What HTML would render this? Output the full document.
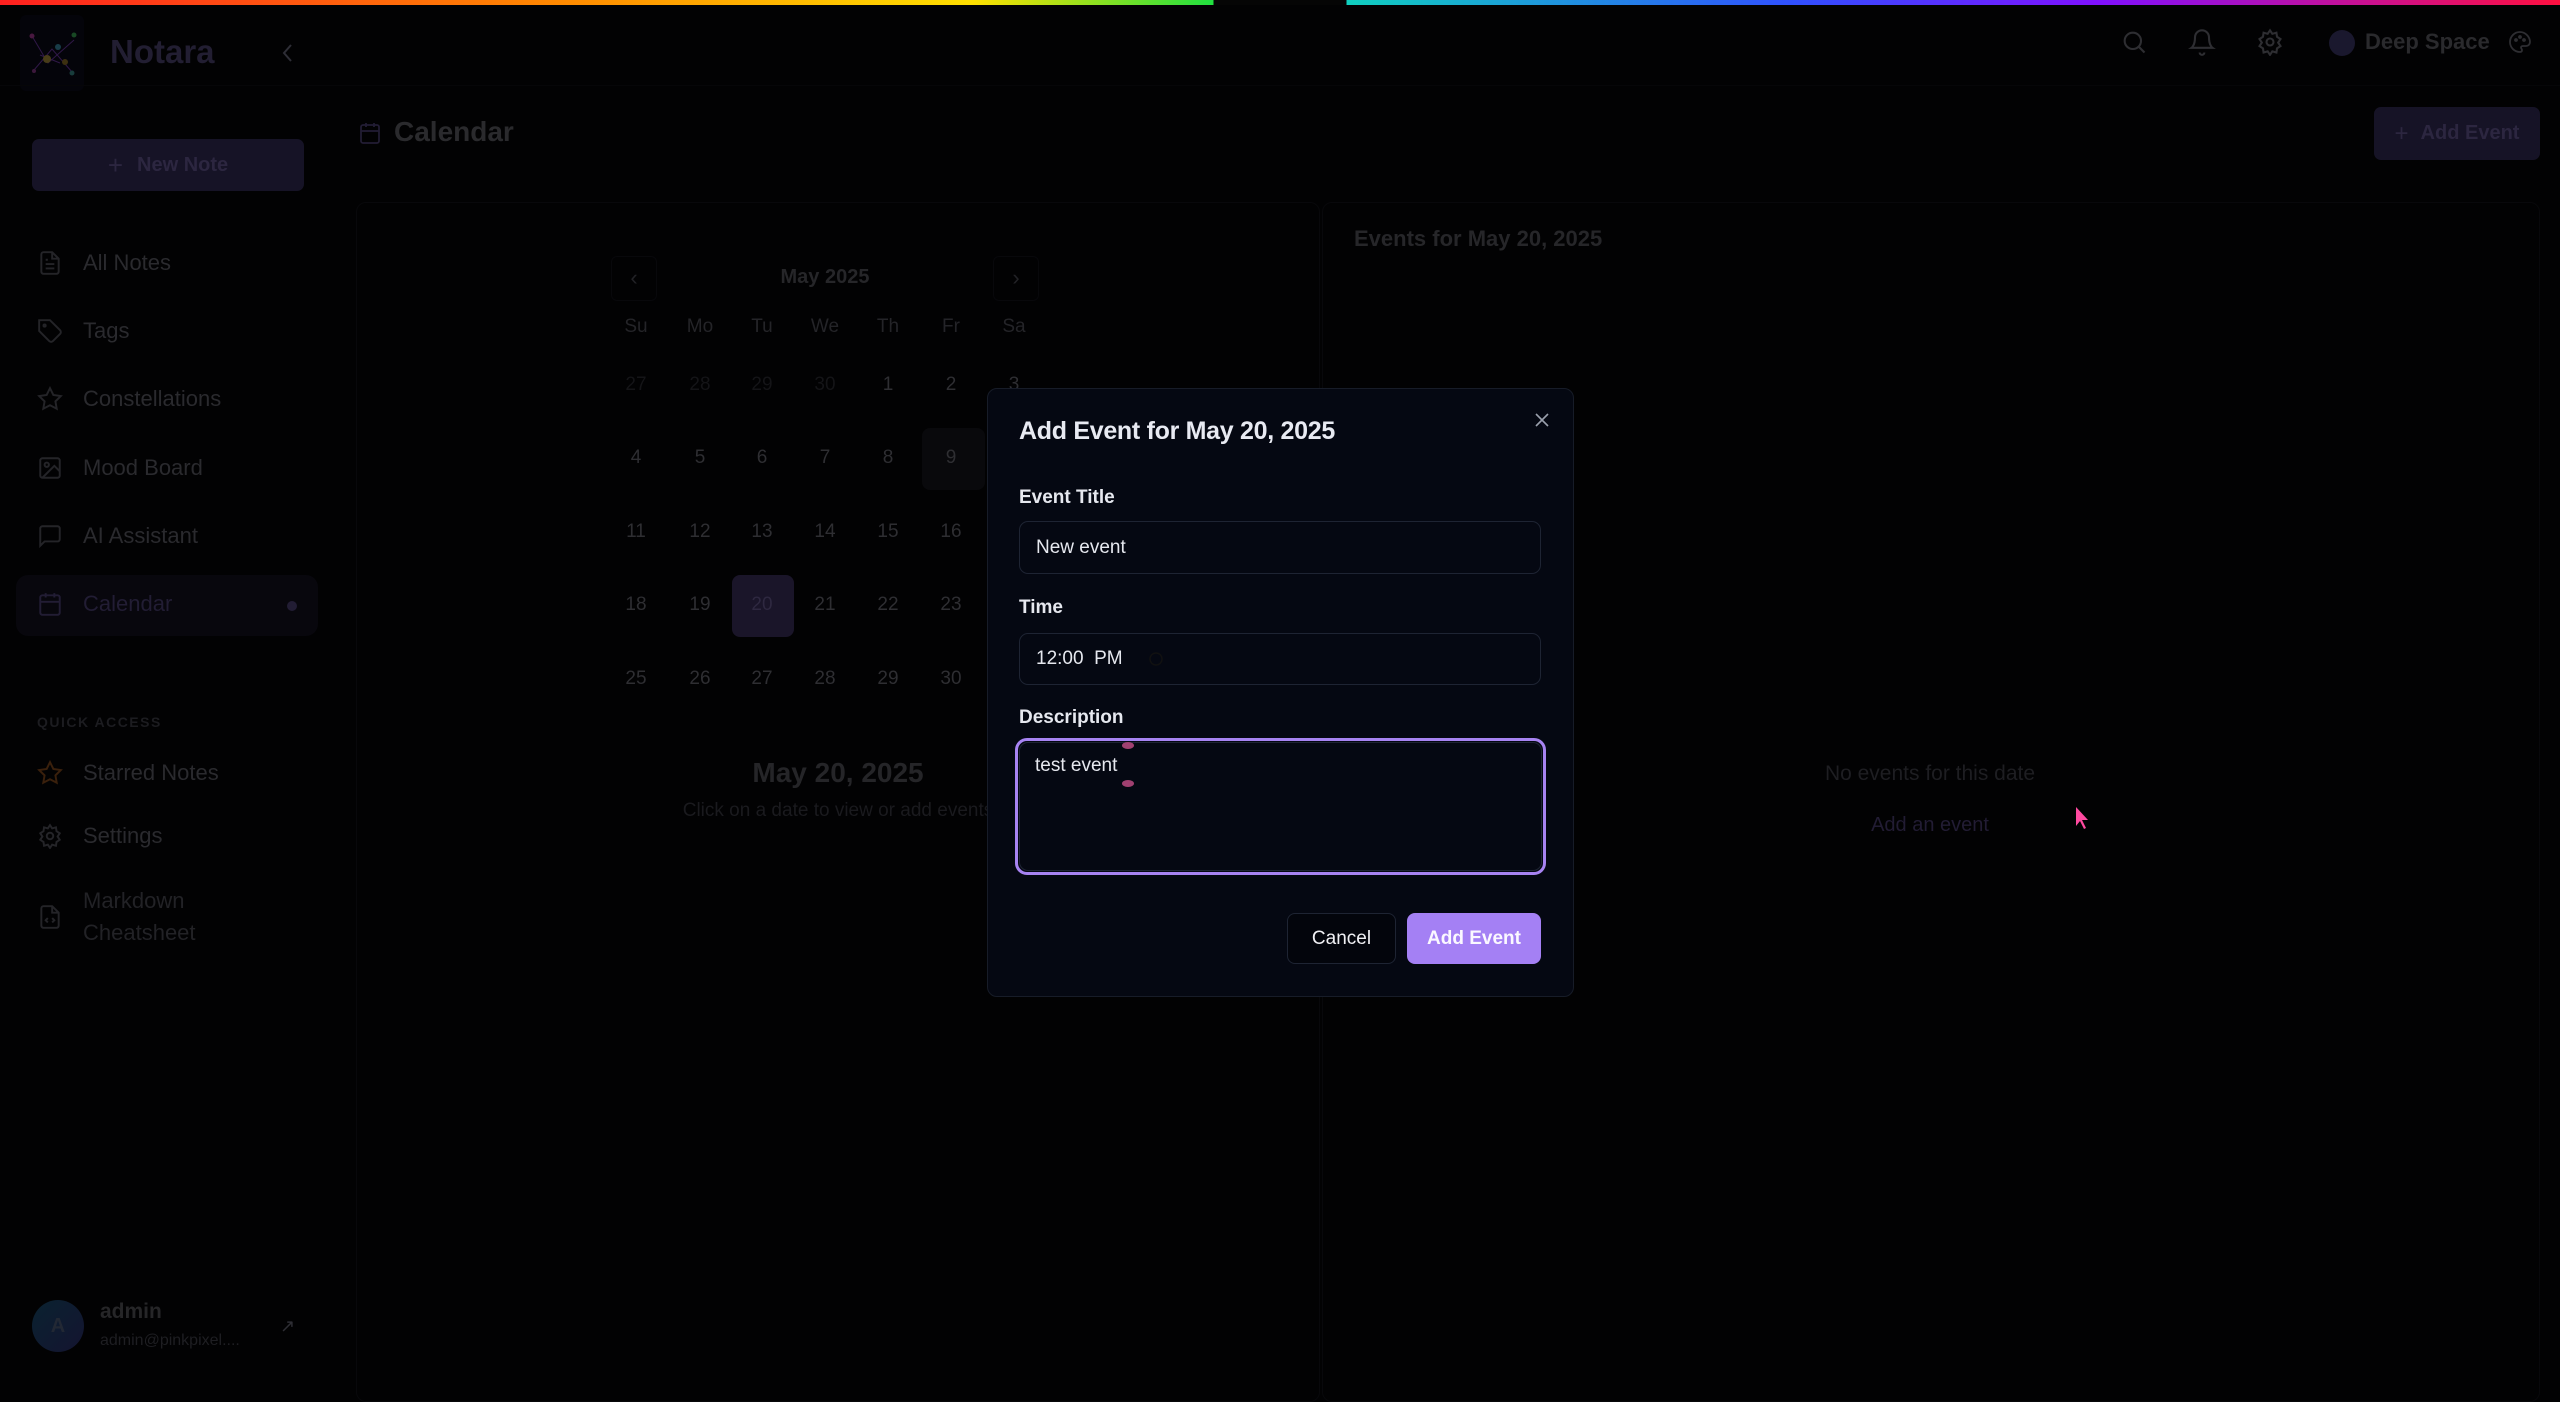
<!DOCTYPE html>
<html><head><meta charset="utf-8"><style>
*{box-sizing:border-box;margin:0;padding:0}
body{width:2560px;height:1383px;background:#020203;font-family:"Liberation Sans",sans-serif;position:relative;overflow:hidden;color:#2c2c30}
.abs{position:absolute}
.bar{left:0;top:0;height:5px;width:2560px;background:linear-gradient(90deg,#ff2020 0%,#ff8a00 22%,#ffe000 38%,#20e040 47.4%,#050505 47.4%,#050505 52.6%,#10d0c0 52.6%,#3050ff 70%,#8010ff 82%,#ff1040 100%)}
.nav{left:37px;font-size:22px;color:#2a2a2e;display:flex;align-items:center;gap:20px}
.nav svg{width:26px;height:26px;stroke:#242428;fill:none;stroke-width:1.8}
.card{border:1px solid #08080b;border-radius:10px}
.dh,.dn{position:absolute;width:60px;text-align:center;font-size:19px}
.dh{color:#242428;top:316px}
.dn{color:#2e2e32}
.lbl{left:1019px;font-size:19px;font-weight:bold;color:#e6e8ef}
.inp{left:1019px;width:522px;border:1px solid #1e2433;border-radius:9px;background:#050812;color:#e6e8ef;font-size:19px;padding-left:16px}
</style></head><body>
<div class="abs bar"></div>
<div class="abs" style="left:20px;top:15px;width:64px;height:76px;background:#04040a;border-radius:6px">
<svg width="64" height="76" viewBox="0 0 64 76"><g stroke-width="1" fill="none"><path d="M12 21 L28 48 L54 25 M14 55 L32 34 L52 57 M20 40 L40 48" stroke="#301848"/></g>
<circle cx="12" cy="21" r="2.5" fill="#481840"/><circle cx="54" cy="20" r="2.5" fill="#184824"/><circle cx="38" cy="32" r="3" fill="#183c48"/><circle cx="27" cy="44" r="4" fill="#483c18"/><circle cx="45" cy="47" r="3" fill="#3c3010"/><circle cx="52" cy="58" r="2.5" fill="#183c3c"/><circle cx="14" cy="56" r="2" fill="#3c183c"/></svg></div>
<div class="abs" style="left:110px;top:33px;font-size:33px;font-weight:bold;color:#221e32">Notara</div>
<svg class="abs" style="left:280px;top:42px" width="16" height="22" viewBox="0 0 16 22"><path d="M11 3 L4 11 L11 19" stroke="#2e2e36" stroke-width="2" fill="none"/></svg>
<div class="abs" style="left:0;top:85px;width:2560px;height:1px;background:#060608"></div>
<div class="abs" style="left:32px;top:139px;width:272px;height:52px;background:#161326;border-radius:7px;color:#2c2640;font-size:20px;font-weight:bold;display:flex;align-items:center;justify-content:center;gap:14px"><span style="font-weight:normal;font-size:26px">+</span>New Note</div>
<div class="abs nav" style="top:250px"><svg viewBox="0 0 24 24"><path d="M14 2H6a2 2 0 0 0-2 2v16a2 2 0 0 0 2 2h12a2 2 0 0 0 2-2V8z M14 2v6h6 M8 13h8 M8 17h8 M8 9h2"/></svg>All Notes</div>
<div class="abs nav" style="top:318px"><svg viewBox="0 0 24 24"><path d="M12 2H2v10l9.3 9.3a2.4 2.4 0 0 0 3.4 0l6.6-6.6a2.4 2.4 0 0 0 0-3.4z"/><circle cx="7" cy="7" r="1"/></svg>Tags</div>
<div class="abs nav" style="top:386px"><svg viewBox="0 0 24 24"><path d="M12 2l3.1 6.3 6.9 1-5 4.9 1.2 6.8L12 17.8 5.8 21l1.2-6.8-5-4.9 6.9-1z"/></svg>Constellations</div>
<div class="abs nav" style="top:455px"><svg viewBox="0 0 24 24"><rect x="3" y="3" width="18" height="18" rx="2"/><circle cx="9" cy="9" r="2"/><path d="M21 15l-5-5L5 21"/></svg>Mood Board</div>
<div class="abs nav" style="top:523px"><svg viewBox="0 0 24 24"><path d="M21 15a2 2 0 0 1-2 2H7l-4 4V5a2 2 0 0 1 2-2h14a2 2 0 0 1 2 2z"/></svg>AI Assistant</div>
<div class="abs" style="left:16px;top:575px;width:302px;height:61px;background:#08070d;border-radius:12px"></div>
<div class="abs nav" style="top:591px;color:#221d34"><svg viewBox="0 0 24 24" style="stroke:#221d34"><rect x="3" y="4" width="18" height="18" rx="2"/><path d="M16 2v4M8 2v4M3 10h18"/></svg>Calendar</div>
<div class="abs" style="left:287px;top:601px;width:10px;height:10px;border-radius:50%;background:#221d34"></div>
<div class="abs" style="left:37px;top:714px;font-size:14px;font-weight:bold;letter-spacing:1.5px;color:#1c1c20">QUICK ACCESS</div>
<div class="abs nav" style="top:760px"><svg viewBox="0 0 24 24" style="stroke:#3a200c"><path d="M12 2l3.1 6.3 6.9 1-5 4.9 1.2 6.8L12 17.8 5.8 21l1.2-6.8-5-4.9 6.9-1z"/></svg>Starred Notes</div>
<div class="abs nav" style="top:823px"><svg viewBox="0 0 24 24"><circle cx="12" cy="12" r="3"/><path d="M12 2l2 3 3.5-1 .5 3.5 3 2-2 3 2 3-3 2-.5 3.5-3.5-1-2 3-2-3-3.5 1-.5-3.5-3-2 2-3-2-3 3-2 .5-3.5 3.5 1z"/></svg>Settings</div>
<div class="abs nav" style="top:885px;line-height:32px;color:#222226"><svg viewBox="0 0 24 24"><path d="M14 2H6a2 2 0 0 0-2 2v16a2 2 0 0 0 2 2h12a2 2 0 0 0 2-2V8z M14 2v6h6 M10 13l-2 2 2 2 M14 13l2 2-2 2"/></svg><span>Markdown<br>Cheatsheet</span></div>
<div class="abs" style="left:32px;top:1300px;width:52px;height:52px;border-radius:50%;background:linear-gradient(135deg,#0a2230,#141430);color:#222834;font-size:20px;font-weight:bold;text-align:center;line-height:52px">A</div>
<div class="abs" style="left:100px;top:1300px;font-size:21px;font-weight:bold;color:#262628">admin</div>
<div class="abs" style="left:100px;top:1332px;font-size:16px;color:#1e1e22">admin@pinkpixel....</div>
<div class="abs" style="left:280px;top:1316px;color:#2e2e34;font-size:18px">↗</div>
<svg class="abs" style="left:358px;top:120px" width="24" height="26" viewBox="0 0 24 24"><rect x="3" y="4" width="18" height="18" rx="2" stroke="#221d34" stroke-width="1.8" fill="none"/><path d="M16 2v4M8 2v4M3 10h18" stroke="#221d34" stroke-width="1.8"/></svg>
<div class="abs" style="left:394px;top:116px;font-size:28px;font-weight:bold;color:#2a2a2d">Calendar</div>
<svg class="abs" style="left:2120px;top:28px" width="28" height="28" viewBox="0 0 24 24" fill="none" stroke="#2e2e32" stroke-width="1.8"><circle cx="11" cy="11" r="7"/><path d="M21 21l-5-5"/></svg>
<svg class="abs" style="left:2188px;top:28px" width="28" height="28" viewBox="0 0 24 24" fill="none" stroke="#2e2e32" stroke-width="1.8"><path d="M6 8a6 6 0 0 1 12 0c0 7 3 9 3 9H3s3-2 3-9M10 21a2 2 0 0 0 4 0"/></svg>
<svg class="abs" style="left:2256px;top:28px" width="28" height="28" viewBox="0 0 24 24" fill="none" stroke="#2e2e32" stroke-width="1.8"><circle cx="12" cy="12" r="3"/><path d="M12 2l2 3 3.5-1 .5 3.5 3 2-2 3 2 3-3 2-.5 3.5-3.5-1-2 3-2-3-3.5 1-.5-3.5-3-2 2-3-2-3 3-2 .5-3.5 3.5 1z"/></svg>
<div class="abs" style="left:2329px;top:30px;width:26px;height:26px;border-radius:50%;background:#1a182e"></div>
<div class="abs" style="left:2365px;top:29px;font-size:22px;font-weight:bold;color:#2a2a2d">Deep Space</div>
<svg class="abs" style="left:2508px;top:30px" width="24" height="24" viewBox="0 0 24 24" fill="none" stroke="#2e2e32" stroke-width="1.8"><path d="M12 2a10 10 0 0 0 0 20c1.5 0 2-1 2-2s-1-1.5-1-2.5 1-1.5 2-1.5h3a4 4 0 0 0 4-4c0-5-4.5-10-10-10z"/><circle cx="8" cy="10" r="1"/><circle cx="12" cy="7" r="1"/><circle cx="16" cy="10" r="1"/></svg>
<div class="abs" style="left:2374px;top:107px;width:166px;height:53px;background:#161326;border-radius:7px;color:#2c2640;font-size:20px;font-weight:bold;display:flex;align-items:center;justify-content:center;gap:12px"><span style="font-weight:normal;font-size:24px">+</span>Add Event</div>
<div class="abs card" style="left:356px;top:202px;width:964px;height:1200px"></div>
<div class="abs card" style="left:1322px;top:202px;width:1218px;height:1200px"></div>
<div class="abs" style="left:611px;top:256px;width:46px;height:45px;border:1px solid #08080b;border-radius:6px;color:#222226;text-align:center;line-height:42px;font-size:22px">‹</div>
<div class="abs" style="left:993px;top:256px;width:46px;height:45px;border:1px solid #08080b;border-radius:6px;color:#222226;text-align:center;line-height:42px;font-size:22px">›</div>
<div class="abs" style="left:725px;top:266px;width:200px;text-align:center;font-size:20px;font-weight:bold;color:#262629">May 2025</div>
<div class="abs" style="left:922px;top:428px;width:63px;height:62px;background:#09090c;border-radius:8px"></div>
<div class="abs" style="left:732px;top:575px;width:62px;height:62px;background:#1a1529;border-radius:8px"></div>
<div class="dh" style="left:606px">Su</div><div class="dh" style="left:670px">Mo</div><div class="dh" style="left:732px">Tu</div><div class="dh" style="left:795px">We</div><div class="dh" style="left:858px">Th</div><div class="dh" style="left:921px">Fr</div><div class="dh" style="left:984px">Sa</div>
<div id="days"></div>
<div class="abs" style="left:600px;top:757px;width:476px;text-align:center;font-size:28px;font-weight:bold;color:#252528">May 20, 2025</div>
<div class="abs" style="left:600px;top:800px;width:476px;text-align:center;font-size:19px;color:#1a1a1e;white-space:nowrap">Click on a date to view or add events</div>
<div class="abs" style="left:1354px;top:226px;font-size:22px;font-weight:bold;color:#262629">Events for May 20, 2025</div>
<div class="abs" style="left:1730px;top:762px;width:400px;text-align:center;font-size:21px;color:#1e1e22">No events for this date</div>
<div class="abs" style="left:1730px;top:814px;width:400px;text-align:center;font-size:20px;color:#221c34">Add an event</div>
<svg class="abs" style="left:2075px;top:806px" width="16" height="26" viewBox="0 0 16 26"><path d="M1 1 L1 20 L5 15 L9 23 L11 22 L7 14 L13 14 Z" fill="#ff4aa0"/></svg>
<div class="abs" style="left:987px;top:388px;width:587px;height:609px;background:#050812;border:1px solid #171c28;border-radius:10px"></div>
<div class="abs" style="left:1019px;top:417px;font-size:25px;font-weight:bold;color:#e8eaf2;letter-spacing:-0.3px">Add Event for May 20, 2025</div>
<svg class="abs" style="left:1534px;top:412px" width="16" height="16" viewBox="0 0 16 16"><path d="M2 2L14 14M14 2L2 14" stroke="#9aa0ac" stroke-width="1.6"/></svg>
<div class="abs lbl" style="top:487px">Event Title</div>
<div class="abs inp" style="top:521px;height:53px;line-height:51px">New event</div>
<div class="abs lbl" style="top:597px">Time</div>
<div class="abs inp" style="top:633px;height:52px;line-height:50px">12:00&nbsp; PM <svg style="vertical-align:middle;margin-left:20px" width="16" height="16" viewBox="0 0 16 16"><circle cx="8" cy="8" r="6" stroke="#111" stroke-width="1.5" fill="none"/></svg></div>
<div class="abs lbl" style="top:707px">Description</div>
<div class="abs" style="left:1015px;top:738px;width:531px;height:137px;border:3px solid #a783f2;border-radius:12px;background:#050812"></div>
<div class="abs" style="left:1019px;top:742px;width:523px;height:129px;border:1px solid #1e2433;border-radius:9px"></div>
<div class="abs" style="left:1035px;top:755px;font-size:19px;color:#e6e8ef">test event</div>
<div class="abs" style="left:1122px;top:742px;width:12px;height:7px;border-radius:50%;background:#a04070"></div>
<div class="abs" style="left:1122px;top:780px;width:12px;height:7px;border-radius:50%;background:#a04070"></div>
<div class="abs" style="left:1287px;top:913px;width:109px;height:51px;border:1px solid #1e2433;border-radius:8px;background:#03050c;color:#f0f0f4;font-size:19px;text-align:center;line-height:49px">Cancel</div>
<div class="abs" style="left:1407px;top:913px;width:134px;height:51px;border-radius:8px;background:#a480f4;color:#fbf8ff;font-size:19px;font-weight:bold;text-align:center;line-height:51px">Add Event</div>
<script>
var xs=[606,670,732,795,858,921,984],ys=[374,447,521,594,668];
var rows=[[27,28,29,30,1,2,3],[4,5,6,7,8,9,10],[11,12,13,14,15,16,17],[18,19,20,21,22,23,24],[25,26,27,28,29,30,31]];
var h='';rows.forEach(function(r,i){r.forEach(function(d,j){
if(i>0&&j==6)return;
var c=i==0&&j<4?'#141417':(i==3&&j==2?'#2e2840':'#2e2e32');
h+='<div class="dn" style="left:'+xs[j]+'px;top:'+ys[i]+'px;color:'+c+'">'+d+'</div>';});});
document.getElementById('days').innerHTML=h;
</script>
</body></html>
